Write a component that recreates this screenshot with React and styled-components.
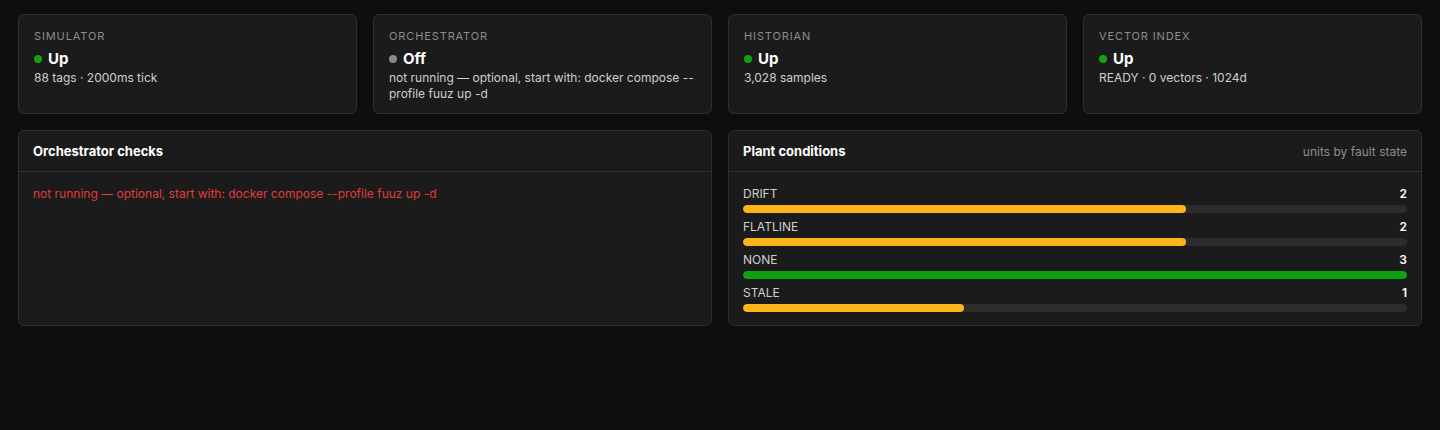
import React from 'react';
import styled, { createGlobalStyle } from 'styled-components';

const GlobalStyle = createGlobalStyle`
    html, body {
        margin: 0;
        background: #0e0e0e;
        font-family: Inter, "Noto Sans", "Liberation Sans", sans-serif;
        -webkit-font-smoothing: antialiased;
    }
`;

const Page = styled.div`
    padding: 14px 18px;
    display: flex;
    flex-direction: column;
    gap: 16px;
`;

const StatusGrid = styled.div`
    display: grid;
    grid-template-columns: repeat(4, 1fr);
    gap: 16px;
`;

const Card = styled.div`
    background: #1b1b1b;
    border: 1px solid #2f2f2f;
    border-radius: 6px;
    padding: 13px 15px;
    height: 100px;
    box-sizing: border-box;
`;

const CardLabel = styled.div`
    font-size: 11px;
    letter-spacing: 0.08em;
    text-transform: uppercase;
    color: #8c8c8c;
    line-height: 16px;
`;

const StatusRow = styled.div`
    display: flex;
    align-items: center;
    gap: 6px;
    margin-top: 5px;
    font-size: 15px;
    font-weight: 700;
    color: #ffffff;
    line-height: 20px;
`;

const Dot = styled.span`
    width: 8px;
    height: 8px;
    border-radius: 50%;
    background: ${p => (p.$on ? '#14a214' : '#8a8a8a')};
`;

const Detail = styled.div`
    font-size: 12px;
    color: #cfcfcf;
    line-height: 16px;
    margin-top: 1px;
`;

const PanelGrid = styled.div`
    display: grid;
    grid-template-columns: 1fr 1fr;
    gap: 16px;
`;

const Panel = styled.div`
    background: #1b1b1b;
    border: 1px solid #2f2f2f;
    border-radius: 6px;
    height: 196px;
    box-sizing: border-box;
    display: flex;
    flex-direction: column;
`;

const PanelHeader = styled.div`
    flex-shrink: 0;
    height: 40px;
    display: flex;
    align-items: center;
    justify-content: space-between;
    padding: 0 14px;
    border-bottom: 1px solid #2f2f2f;
`;

const PanelTitle = styled.div`
    font-size: 13px;
    font-weight: 700;
    color: #ffffff;
`;

const PanelHint = styled.div`
    font-size: 12px;
    color: #8c8c8c;
`;

const PanelBody = styled.div`
    padding: 14px 14px;
    display: flex;
    flex-direction: column;
    gap: 6px;
`;

const ErrorText = styled.div`
    font-size: 12px;
    color: #e03b3b;
    line-height: 16px;
`;

const Meter = styled.div`
    display: flex;
    flex-direction: column;
    gap: 3px;
`;

const MeterHead = styled.div`
    display: flex;
    justify-content: space-between;
    font-size: 12px;
    line-height: 16px;
    color: #cfcfcf;
`;

const MeterCount = styled.span`
    color: #ffffff;
    font-weight: 600;
`;

const Track = styled.div`
    height: 8px;
    border-radius: 4px;
    background: #2c2c2c;
    overflow: hidden;
`;

const Fill = styled.div`
    height: 100%;
    border-radius: 4px;
    background: ${p => (p.$ok ? '#0ea00e' : '#fbb41a')};
`;

const services = [
    { name: 'Simulator', on: true, state: 'Up', detail: '88 tags · 2000ms tick' },
    { name: 'Orchestrator', on: false, state: 'Off', detail: 'not running — optional, start with: docker compose --profile fuuz up -d' },
    { name: 'Historian', on: true, state: 'Up', detail: '3,028 samples' },
    { name: 'Vector index', on: true, state: 'Up', detail: 'READY · 0 vectors · 1024d' },
];

const conditions = [
    { label: 'DRIFT', count: 2 },
    { label: 'FLATLINE', count: 2 },
    { label: 'NONE', count: 3, ok: true },
    { label: 'STALE', count: 1 },
];

const max = Math.max(...conditions.map(c => c.count));

export default function App() {
    return (
        <>
            <GlobalStyle />
            <Page>
                <StatusGrid>
                    {services.map(s => (
                        <Card key={s.name}>
                            <CardLabel>{s.name}</CardLabel>
                            <StatusRow>
                                <Dot $on={s.on} />
                                {s.state}
                            </StatusRow>
                            <Detail>{s.detail}</Detail>
                        </Card>
                    ))}
                </StatusGrid>
                <PanelGrid>
                    <Panel>
                        <PanelHeader>
                            <PanelTitle>Orchestrator checks</PanelTitle>
                        </PanelHeader>
                        <PanelBody>
                            <ErrorText>not running — optional, start with: docker compose --profile fuuz up -d</ErrorText>
                        </PanelBody>
                    </Panel>
                    <Panel>
                        <PanelHeader>
                            <PanelTitle>Plant conditions</PanelTitle>
                            <PanelHint>units by fault state</PanelHint>
                        </PanelHeader>
                        <PanelBody>
                            {conditions.map(c => (
                                <Meter key={c.label}>
                                    <MeterHead>
                                        <span>{c.label}</span>
                                        <MeterCount>{c.count}</MeterCount>
                                    </MeterHead>
                                    <Track>
                                        <Fill $ok={c.ok} style={{ width: `${(c.count / max) * 100}%` }} />
                                    </Track>
                                </Meter>
                            ))}
                        </PanelBody>
                    </Panel>
                </PanelGrid>
            </Page>
        </>
    );
}
